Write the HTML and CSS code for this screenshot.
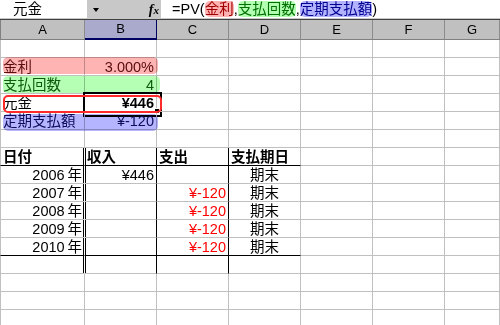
FILE: index.html
```html
<!DOCTYPE html>
<html lang="ja">
<head>
<meta charset="utf-8">
<link rel="stylesheet" href="styles.css">
</head>
<body>
<div class="fbar">
  <div class="namebox">元金</div>
  <div class="fbtn"><span class="arrow"></span><span class="fx">f<span class="fxx">x</span></span></div>
  <div class="formula">=PV(<span class="ref r1">金利</span>,<span class="ref r2">支払回数</span>,<span class="ref r3">定期支払額</span>)</div>
</div>
<div class="sheet">
  <div class="hrow">
    <div class="h">A</div><div class="h sel">B</div><div class="h">C</div><div class="h">D</div><div class="h">E</div><div class="h">F</div><div class="h">G</div>
  </div>
  <div class="row"><div class="c"></div><div class="c"></div><div class="c"></div><div class="c"></div><div class="c"></div><div class="c"></div><div class="c"></div></div>
  <div class="row"><div class="c t1">金利</div><div class="c r t1">3.000%</div><div class="c"></div><div class="c"></div><div class="c"></div><div class="c"></div><div class="c"></div></div>
  <div class="row"><div class="c t2">支払回数</div><div class="c r t2">4</div><div class="c"></div><div class="c"></div><div class="c"></div><div class="c"></div><div class="c"></div></div>
  <div class="row"><div class="c">元金</div><div class="c r b active">¥446<span class="handle"></span></div><div class="c"></div><div class="c"></div><div class="c"></div><div class="c"></div><div class="c"></div></div>
  <div class="row"><div class="c t3">定期支払額</div><div class="c r t3">¥-120</div><div class="c"></div><div class="c"></div><div class="c"></div><div class="c"></div><div class="c"></div></div>
  <div class="row"><div class="c"></div><div class="c"></div><div class="c"></div><div class="c"></div><div class="c"></div><div class="c"></div><div class="c"></div></div>
  <div class="row"><div class="c b dl hb">日付</div><div class="c b dr vb hb">収入</div><div class="c b vb hb">支出</div><div class="c b hb">支払期日</div><div class="c"></div><div class="c"></div><div class="c"></div></div>
  <div class="row"><div class="c r dl">2006&#8201;年</div><div class="c r dr vb">¥446</div><div class="c vb"></div><div class="c ctr">期末</div><div class="c"></div><div class="c"></div><div class="c"></div></div>
  <div class="row"><div class="c r dl">2007&#8201;年</div><div class="c dr vb"></div><div class="c r vb red">¥-120</div><div class="c ctr">期末</div><div class="c"></div><div class="c"></div><div class="c"></div></div>
  <div class="row"><div class="c r dl">2008&#8201;年</div><div class="c dr vb"></div><div class="c r vb red">¥-120</div><div class="c ctr">期末</div><div class="c"></div><div class="c"></div><div class="c"></div></div>
  <div class="row"><div class="c r dl">2009&#8201;年</div><div class="c dr vb"></div><div class="c r vb red">¥-120</div><div class="c ctr">期末</div><div class="c"></div><div class="c"></div><div class="c"></div></div>
  <div class="row"><div class="c r dl hb">2010&#8201;年</div><div class="c dr vb hb"></div><div class="c r vb red hb">¥-120</div><div class="c ctr hb">期末</div><div class="c"></div><div class="c"></div><div class="c"></div></div>
  <div class="row"><div class="c dl"></div><div class="c dr vb"></div><div class="c vb"></div><div class="c"></div><div class="c"></div><div class="c"></div><div class="c"></div></div>
  <div class="row"><div class="c"></div><div class="c"></div><div class="c"></div><div class="c"></div><div class="c"></div><div class="c"></div><div class="c"></div></div>
  <div class="row"><div class="c"></div><div class="c"></div><div class="c"></div><div class="c"></div><div class="c"></div><div class="c"></div><div class="c"></div></div>
  <div class="row"><div class="c"></div><div class="c"></div><div class="c"></div><div class="c"></div><div class="c"></div><div class="c"></div><div class="c"></div></div>

  <div class="band band1"></div>
  <div class="band band2"></div>
  <div class="band band3"></div>
  <div class="outline"></div>
</div>
</body>
</html>
```
FILE: styles.css
```css
* { box-sizing: border-box; margin: 0; padding: 0; }
html, body { width: 500px; height: 325px; overflow: hidden; background: #fff; }
body { font-family: "Liberation Sans", "Noto Sans CJK JP", sans-serif; color: #000; }

.fbar { display: flex; height: 20px; background: #c8c8c8; border-bottom: 1px solid #404040; }
.namebox { width: 87px; height: 19px; background: #fff; font-size: 14.5px; line-height: 18px; padding-left: 13px; border-bottom: 1px solid #c8c8c8; }
.fbtn { width: 74px; height: 19px; display: flex; align-items: center; justify-content: space-between; padding: 0 2px 0 6px; }
.arrow { width: 0; height: 0; border-left: 3.5px solid transparent; border-right: 3.5px solid transparent; border-top: 4px solid #000; margin-top: 1px; }
.fx { font-family: "Liberation Serif", serif; font-style: italic; font-weight: bold; font-size: 14px; line-height: 18px; }
.fxx { font-size: 11px; }
.formula { flex: 1; height: 19px; background: #fff; font-size: 14.5px; line-height: 18px; padding-left: 11px; white-space: nowrap; border-bottom: 1px solid #c8c8c8; }
.ref { border-radius: 5px; display: inline-block; line-height: 16px; }
.r1 { background: #ffb2b2; color: #a00000; }
.r2 { background: #b2ffb2; color: #007000; }
.r3 { background: #b2b2ff; color: #000090; }

.sheet { position: relative; }
.hrow, .row { display: grid; grid-template-columns: 85px 72px 72px 72px 72px 72px 55px; }
.hrow { height: 20px; background: #c0c0c0; }
.h { border-right: 1px solid #8c8c8c; border-bottom: 1px solid #808080; text-align: center; font-size: 13px; line-height: 19px; }
.h.sel { background: #aaaacc; border-bottom: 2px solid #000060; border-right: 1px solid #000060; line-height: 18px; }

.row { height: 18px; }
.c { border-right: 1px solid #c0c0c0; border-bottom: 1px solid #c0c0c0; padding: 1px 2px 0; font-size: 14.5px; line-height: 16px; white-space: nowrap; position: relative; }
.row .c:first-child, .hrow .h:first-child { border-left: 1px solid #c0c0c0; }
.hrow .h:first-child { border-left-color: #808080; }
.r { text-align: right; }
.ctr { text-align: center; }
.b { font-weight: bold; }
.red { color: #ff0000; }
.t1 { color: #5a1010; }
.t2 { color: #105a10; }
.t3 { color: #10105a; }

.hb { border-bottom-color: #000; }
.vb { border-right-color: #000; }
.dl { border-right-color: #fff; box-shadow: inset -1px 0 0 #000; }
.dr { box-shadow: inset 1px 0 0 #000; }

.active::before { content: ""; position: absolute; left: -2px; top: -2px; width: 75px; height: 21px; border: 2px solid #000; }
.handle { position: absolute; right: -4px; bottom: -3px; width: 6px; height: 6px; background: #000; border: 1px solid #fff; }

.band { position: absolute; left: 3px; border-radius: 5px; mix-blend-mode: multiply; pointer-events: none; }
.band1 { top: 37px; width: 155px; height: 17px; background: #ffb4b4; }
.band2 { top: 56px; width: 157px; height: 17px; background: #b4ffb4; }
.band3 { top: 94px; width: 155px; height: 17px; background: #b4b4ff; }
.outline { position: absolute; left: 3px; top: 75px; width: 159px; height: 18px; border: 2px solid #ff2a2a; border-radius: 5px; pointer-events: none; }
```
